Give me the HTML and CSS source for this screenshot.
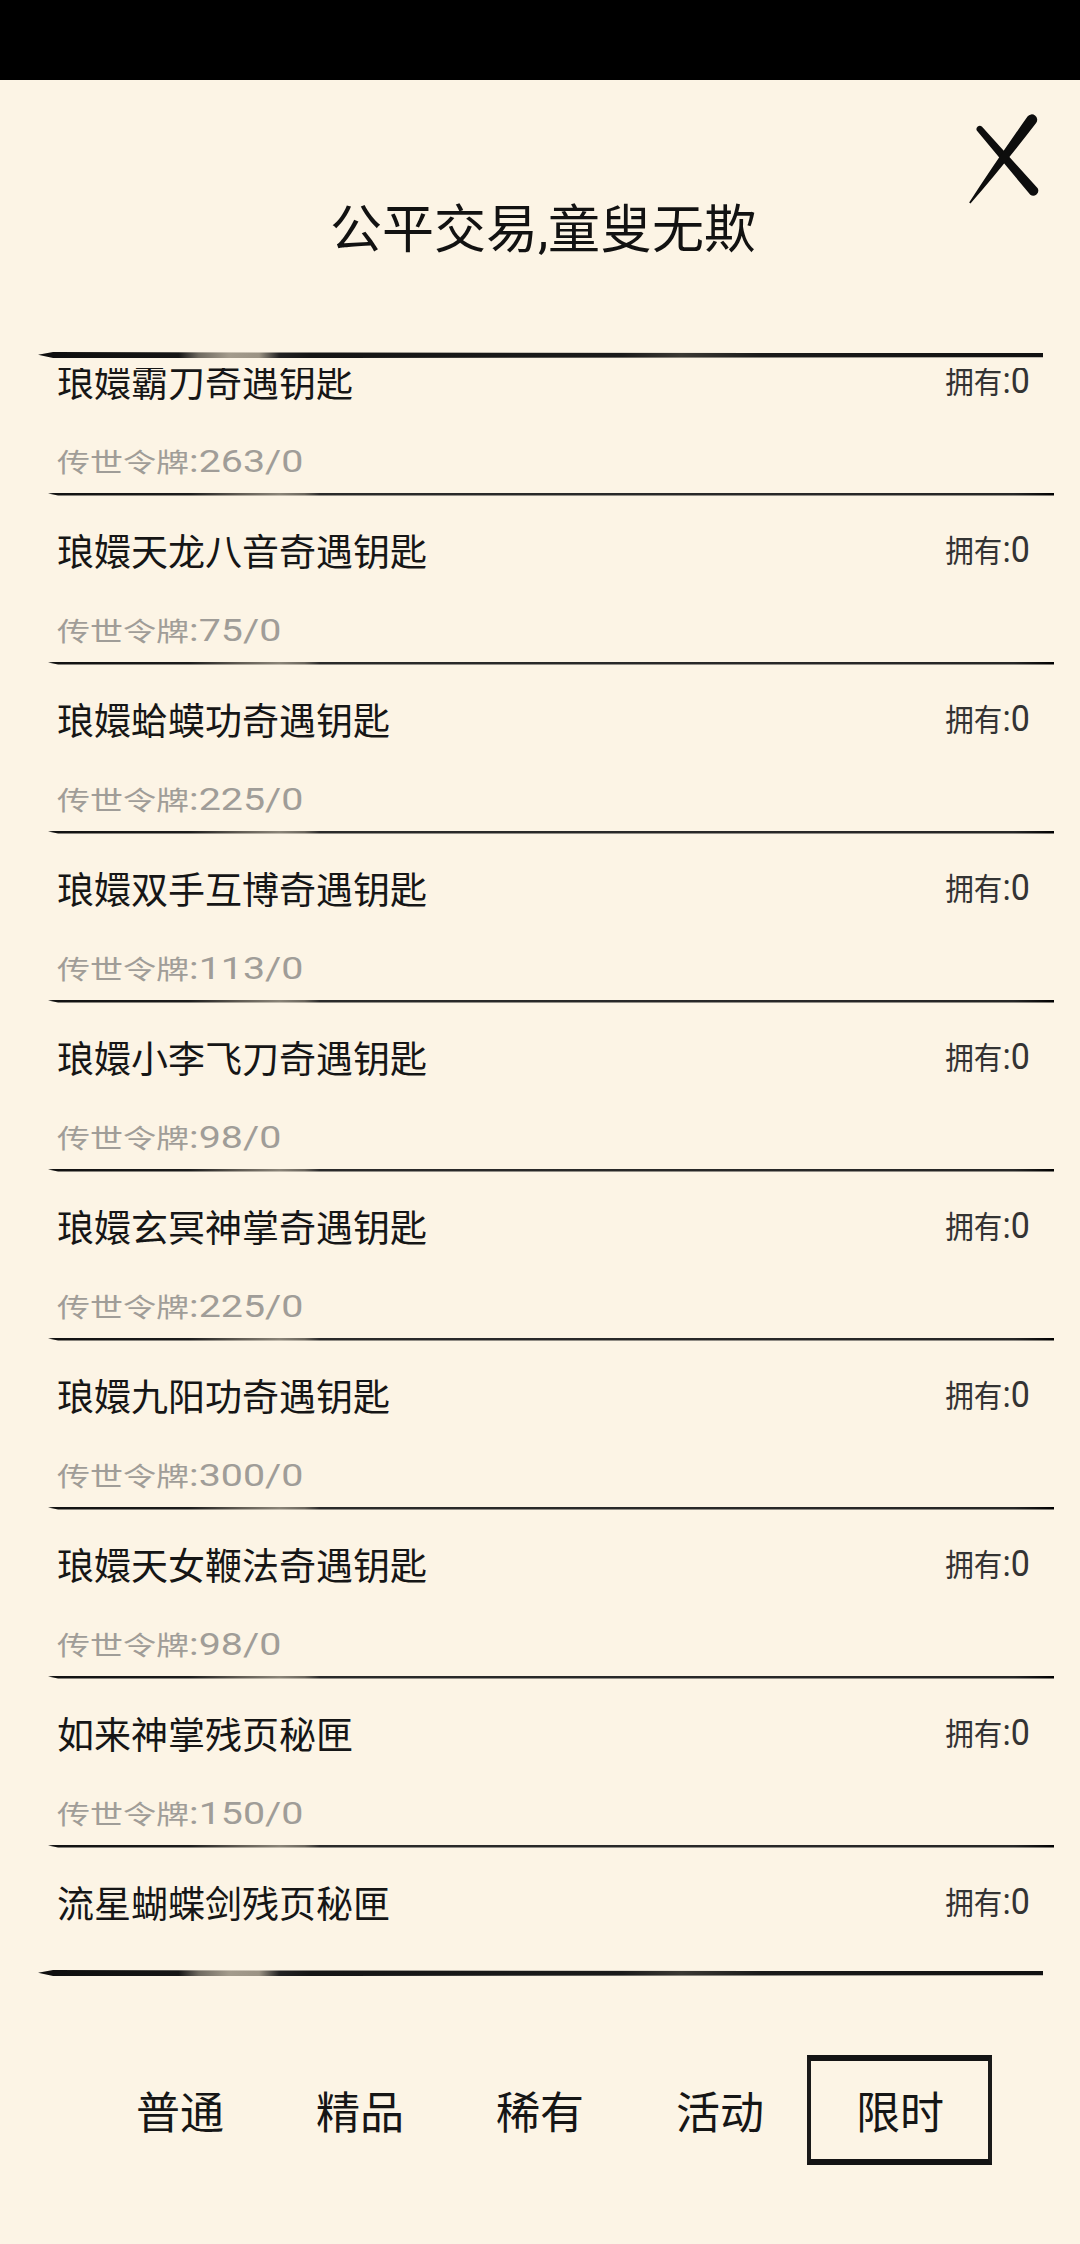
FILE: index.html
```html
<!DOCTYPE html>
<html lang="zh-CN">
<head>
<meta charset="utf-8">
<title>公平交易</title>
<link rel="stylesheet" href="styles.css">
</head>
<body>
<div class="screen">
  <div class="statusbar"></div>
  <header class="header">
    <h1 class="title">公平交易,童叟无欺</h1>
    <button class="close" aria-label="关闭">
      <svg viewBox="0 0 90 110" width="84" height="102">
        <path d="M23.5,18 L83.5,84.5 A5.5,5.5 0 0 1 75.5,91.5 L18,22.5 A3.6,3.6 0 0 1 23.5,18 Z" fill="#0d0d0d"/>
        <path d="M72.5,7 A5.8,5.8 0 0 1 81.8,14 Q44,63 11,100.8 L9.6,99.8 Q38,56 72.5,7 Z" fill="#0d0d0d"/>
      </svg>
    </button>
  </header>
  <div class="frame-line"></div>
  <div class="list-viewport">
    <ul class="list">
      <li class="item">
        <div class="row"><span class="name">琅嬛霸刀奇遇钥匙</span><span class="own">拥有<span class="num">:0</span></span></div>
        <div class="price"><span class="price-text">传世令牌<span class="num">:263/0</span></span></div>
        <div class="divider"></div>
      </li>
      <li class="item">
        <div class="row"><span class="name">琅嬛天龙八音奇遇钥匙</span><span class="own">拥有<span class="num">:0</span></span></div>
        <div class="price"><span class="price-text">传世令牌<span class="num">:75/0</span></span></div>
        <div class="divider"></div>
      </li>
      <li class="item">
        <div class="row"><span class="name">琅嬛蛤蟆功奇遇钥匙</span><span class="own">拥有<span class="num">:0</span></span></div>
        <div class="price"><span class="price-text">传世令牌<span class="num">:225/0</span></span></div>
        <div class="divider"></div>
      </li>
      <li class="item">
        <div class="row"><span class="name">琅嬛双手互博奇遇钥匙</span><span class="own">拥有<span class="num">:0</span></span></div>
        <div class="price"><span class="price-text">传世令牌<span class="num">:113/0</span></span></div>
        <div class="divider"></div>
      </li>
      <li class="item">
        <div class="row"><span class="name">琅嬛小李飞刀奇遇钥匙</span><span class="own">拥有<span class="num">:0</span></span></div>
        <div class="price"><span class="price-text">传世令牌<span class="num">:98/0</span></span></div>
        <div class="divider"></div>
      </li>
      <li class="item">
        <div class="row"><span class="name">琅嬛玄冥神掌奇遇钥匙</span><span class="own">拥有<span class="num">:0</span></span></div>
        <div class="price"><span class="price-text">传世令牌<span class="num">:225/0</span></span></div>
        <div class="divider"></div>
      </li>
      <li class="item">
        <div class="row"><span class="name">琅嬛九阳功奇遇钥匙</span><span class="own">拥有<span class="num">:0</span></span></div>
        <div class="price"><span class="price-text">传世令牌<span class="num">:300/0</span></span></div>
        <div class="divider"></div>
      </li>
      <li class="item">
        <div class="row"><span class="name">琅嬛天女鞭法奇遇钥匙</span><span class="own">拥有<span class="num">:0</span></span></div>
        <div class="price"><span class="price-text">传世令牌<span class="num">:98/0</span></span></div>
        <div class="divider"></div>
      </li>
      <li class="item">
        <div class="row"><span class="name">如来神掌残页秘匣</span><span class="own">拥有<span class="num">:0</span></span></div>
        <div class="price"><span class="price-text">传世令牌<span class="num">:150/0</span></span></div>
        <div class="divider"></div>
      </li>
      <li class="item">
        <div class="row"><span class="name">流星蝴蝶剑残页秘匣</span><span class="own">拥有<span class="num">:0</span></span></div>
      </li>
    </ul>
  </div>
  <div class="frame-line bottom"></div>
  <nav class="tabs">
    <span class="tab">普通</span>
    <span class="tab">精品</span>
    <span class="tab">稀有</span>
    <span class="tab">活动</span>
    <span class="tab active">限时</span>
  </nav>
</div>
</body>
</html>
```

FILE: styles.css
```css
* {
  box-sizing: border-box;
  margin: 0;
  padding: 0;
}

html, body {
  width: 1080px;
  height: 2244px;
  background: #fcf4e5;
}

body {
  font-family: "Noto Sans CJK SC", "Noto Sans", sans-serif;
  color: #111;
  overflow: hidden;
}

.screen {
  width: 1080px;
  height: 2244px;
  display: flex;
  flex-direction: column;
  background: #fcf4e5;
}

.statusbar {
  flex: none;
  height: 80px;
  background: #000;
}

.header {
  position: relative;
  flex: none;
  height: 272px;
  display: flex;
  justify-content: center;
  padding-top: 120px;
  padding-left: 6px;
}

.title {
  font-family: "Roboto", "Noto Sans CJK SC", sans-serif;
  font-size: 52px;
  font-weight: 400;
  line-height: 62px;
  height: 62px;
  color: #121212;
}

.close {
  position: absolute;
  top: 30px;
  right: 36px;
  width: 84px;
  height: 102px;
  border: 0;
  background: none;
}

.close svg {
  display: block;
}

.frame-line {
  flex: none;
  height: 6px;
  width: 1005px;
  margin-left: 38px;
  background: linear-gradient(90deg,
    #0e0e0e 0%, #151515 14%, #6f6a60 16%, #a39b8c 19%, #9b9384 22%,
    #222 24%, #151515 27%, #1a1a1a 58%, #3a3833 64%, #1a1a1a 72%, #111 100%);
  clip-path: polygon(0 45%, 1.5% 0, 30% 10%, 100% 18%, 100% 88%, 30% 100%, 1.5% 100%);
}

.frame-line.bottom {
  margin-top: 8px;
}

.list-viewport {
  flex: none;
  margin-top: 10px;
  margin-left: 38px;
  width: 1016px;
  height: 1594px;
  overflow: hidden;
}

.list {
  list-style: none;
  margin-top: -41.5px;
}

.item {
  height: 169px;
  display: flex;
  flex-direction: column;
  padding-top: 32px;
}

.row {
  display: flex;
  justify-content: space-between;
  align-items: center;
  height: 44px;
  padding: 0 24px 0 19px;
}

.name {
  font-size: 37px;
  line-height: 44px;
  color: #161616;
}

.own {
  display: inline-block;
  font-size: 31px;
  line-height: 44px;
  color: #333;
  transform: scaleX(0.92);
  transform-origin: right center;
}

.own .num {
  font-family: "Roboto", sans-serif;
  font-size: 37px;
}

.price {
  margin-top: 40.5px;
  height: 36px;
  line-height: 36px;
  padding-left: 19px;
  white-space: nowrap;
}

.price-text {
  display: inline-block;
  font-size: 26px;
  color: #a09d98;
  transform: scaleX(1.27);
  transform-origin: left center;
}

.price-text .num {
  font-family: "Roboto", sans-serif;
  font-size: 31px;
}

.divider {
  margin-top: auto;
  margin-left: 10px;
  height: 3px;
  background: linear-gradient(90deg,
    #111 0%, #1c1c1c 14%, #5f5a52 19%, #8a8478 23%, #6a655c 25.5%,
    #2a2a2a 27%, #262626 96%, #000 100%);
  clip-path: polygon(0 30%, 1% 0, 100% 0, 100% 100%, 1% 100%);
}

.tabs {
  flex: none;
  margin-top: 79px;
  height: 110px;
  display: flex;
  justify-content: center;
}

.tab {
  position: relative;
  width: 180px;
  height: 110px;
  line-height: 110px;
  text-align: center;
  font-size: 44px;
  color: #161616;
}

.tab.active::before {
  content: "";
  position: absolute;
  top: 0;
  bottom: 0;
  left: -3px;
  right: -2px;
  border-left: 4px solid #1a1a1a;
  border-right: 4px solid #1a1a1a;
  border-top: 6px solid #141414;
  border-bottom: 6px solid #141414;
}
```
